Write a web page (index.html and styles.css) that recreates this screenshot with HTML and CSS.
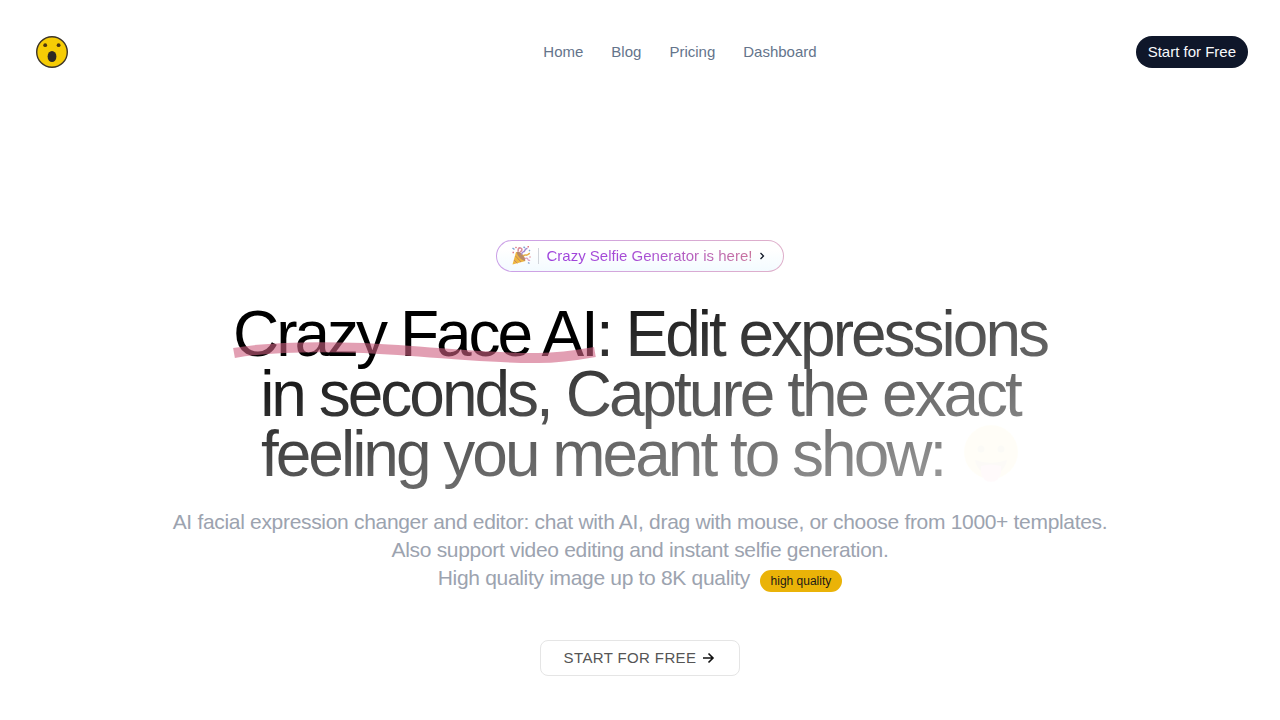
FILE: index.html
```
<!doctype html>
<html lang="en">
  <head>
    <meta charset="UTF-8" />
    <meta name="viewport" content="width=device-width, initial-scale=1.0" />
    <title>Crazy Face AI</title>
    <link rel="stylesheet" href="styles.css">
  </head>
  <body>
    <header class="header">
      <a class="logo" href="#" aria-label="Crazy Face AI">
        <svg viewBox="0 0 32 32" width="32" height="32">
          <circle cx="16" cy="16" r="15.3" fill="#f6cc05" stroke="#3c3427" stroke-width="1.4" />
          <circle cx="9.2" cy="9.2" r="1.9" fill="#4a3510" />
          <circle cx="22.6" cy="9.2" r="1.9" fill="#4a3510" />
          <ellipse cx="16" cy="20.5" rx="4.4" ry="5.5" fill="#2d2924" />
        </svg>
      </a>
      <nav class="nav">
        <a href="#">Home</a>
        <a href="#">Blog</a>
        <a href="#">Pricing</a>
        <a href="#">Dashboard</a>
      </nav>
      <div class="header-actions">
        <button class="start-btn" type="button">Start for Free</button>
      </div>
    </header>

    <main class="hero">
      <a class="announcement" href="#">
        <svg class="party" viewBox="0 0 20 20" width="20" height="20" aria-hidden="true">
          <path d="M1.5 18.5 5 6C9 7 13 11 14.5 15z" fill="#efb840" />
          <path d="m4.5 10 5.5 6M3 14l3.3 3.3M5.8 6.2 13.7 15" fill="none" stroke="#c98560" stroke-width="1" />
          <ellipse cx="10" cy="10" rx="2.2" ry="5.7" transform="rotate(-42 10 10)" fill="#b98a68" />
          <path d="M7.5 5.5c-1-2 0-4 2-3.5s2 3-.5 4" fill="none" stroke="#d98f9d" stroke-width="1.6" />
          <path d="M10.5 8.5c.5-3 2-2 3-3.5s1-3 3-2.500" fill="none" stroke="#a58bd0" stroke-width="1.4" />
          <path d="M12 10c2-2 3.5 0 5-1.5s1.5-1 2-1" fill="none" stroke="#e5b04b" stroke-width="1.6" />
          <path d="M14 13c1-1.5 2.5-1 3 .5s1.5 1 2 .5" fill="none" stroke="#dd9bc0" stroke-width="1.2" />
          <path d="m1.5 2 2 1.5M12.5.8l1.5 1M18 5l1-.8M17 16.5l1.5 1" stroke="#7fa4d4" stroke-width="1.5" />
          <path d="m4.5 1 1 1M16.5.8H18M1.5 6.5H3M18.5 11h1" stroke="#de7a85" stroke-width="1.4" />
        </svg>
        <span class="divider"></span>
        <span class="announcement-text">Crazy Selfie Generator is here!</span>
        <svg class="chevron" viewBox="0 0 24 24" width="12" height="12" aria-hidden="true">
          <path d="m9 18 6-6-6-6" />
        </svg>
      </a>

      <h1 class="title">
        <span class="brand">Crazy Face AI<svg class="underline" viewBox="0 0 366 24" preserveAspectRatio="none" aria-hidden="true">
          <path d="M1 13C34 7 74 6 132 8C208 12 260 19 308 18C330 18 348 15 365 12" />
        </svg></span>: Edit expressions<br />
        in seconds, Capture the exact<br />
        feeling you meant to show:
        <svg class="face" viewBox="0 0 56 60" aria-hidden="true">
          <circle cx="28" cy="28" r="27" fill="#ffe45c" />
          <circle cx="18" cy="25" r="3.5" fill="#b09a40" />
          <circle cx="38" cy="25" r="3.5" fill="#b09a40" />
          <path d="M12 36q16 6 32 0q-3 14-16 14T12 36z" fill="#c09050" />
          <path d="M18 42q10-3 20 0v7q-2 9-10 9t-10-9z" fill="#ff9fb0" />
        </svg>
      </h1>

      <p class="subtitle">
        AI facial expression changer and editor: chat with AI, drag with mouse, or choose from 1000+ templates.<br />
        Also support video editing and instant selfie generation.<br />
        High quality image up to 8K quality
        <span class="badge">high quality</span>
      </p>

      <a class="cta" href="#">
        START FOR FREE
        <svg viewBox="0 0 16 16" width="16" height="16" aria-hidden="true">
          <path d="M3 8h10M8.500 3.500 13 8l-4.500 4.500" />
        </svg>
      </a>
    </main>
  </body>
</html>
```

FILE: styles.css
```
* {
  box-sizing: border-box;
}

body {
  margin: 0;
  background: #fff;
  font-family: "Liberation Sans", Arial, sans-serif;
  font-size: 15px;
  line-height: 24px;
}

a {
  color: inherit;
  text-decoration: none;
}

.header {
  display: grid;
  grid-template-columns: 1fr auto 1fr;
  align-items: center;
  padding: 36px 32px;
}

.logo {
  justify-self: start;
  display: flex;
  padding-left: 4px;
}

.nav {
  display: flex;
  gap: 28px;
  padding-left: 80px;
  color: #64748b;
}

.header-actions {
  justify-self: end;
}

.start-btn {
  display: block;
  height: 32px;
  padding: 0 12px;
  border: none;
  border-radius: 16px;
  background: #0f172a;
  color: #f8fafc;
  font: inherit;
  cursor: pointer;
}

.hero {
  display: flex;
  flex-direction: column;
  align-items: center;
  padding: 136px 32px 44px;
  text-align: center;
}

.announcement {
  display: flex;
  align-items: center;
  height: 32px;
  padding: 0 15px 0 14px;
  border: 1px solid transparent;
  border-radius: 16px;
  background:
    linear-gradient(#ffffff 30%, #f3fbff) padding-box,
    linear-gradient(to right, #cba0e8, #dfafca) border-box;
}

.divider {
  width: 1px;
  height: 16px;
  margin: 0 8px 0 7px;
  background: #d1d5db;
}

.announcement-text {
  background: linear-gradient(to right, #9d40dc, #aa50d2 50%, #c8739d);
  background-clip: text;
  color: transparent;
}

.chevron {
  margin-left: 4px;
  fill: none;
  stroke: #111827;
  stroke-width: 2.5;
}

.title {
  margin: 32px 0 0;
  padding: 0 58px 8px;
  font-size: 64px;
  font-weight: 400;
  line-height: 60px;
  letter-spacing: -3px;
  background: linear-gradient(to bottom right, #000 17%, #1c1c1c 28%, #5a5a5a 54%, #939393 85%, #a9a9a9);
  background-clip: text;
  color: transparent;
}

.brand {
  position: relative;
  display: inline-block;
  color: #000;
}

/* hand-drawn marker stroke over the product name */
.underline {
  position: absolute;
  left: 0;
  bottom: 0;
  width: 100%;
  height: 24px;
  fill: none;
  stroke: #d06182;
  stroke-width: 10;
  opacity: 0.6;
}

.face {
  width: 56px;
  height: 60px;
  margin-left: 4px;
  vertical-align: -8px;
  opacity: 0.04;
}

.subtitle {
  margin: 16px 0 0;
  color: #9ca3af;
  font-size: 21px;
  line-height: 28px;
  letter-spacing: -0.015em;
}

.badge {
  display: inline-block;
  margin-left: 4px;
  padding: 0 11px;
  border-radius: 11px;
  background: #eab308;
  color: #1c1917;
  font-size: 12px;
  line-height: 22px;
  letter-spacing: 0;
}

.cta {
  display: flex;
  align-items: center;
  justify-content: center;
  gap: 4px;
  width: 200px;
  height: 36px;
  margin-top: 48px;
  border: 1px solid #e5e5e5;
  border-radius: 8px;
  color: #555;
  letter-spacing: 0.025em;
}

.cta svg {
  fill: none;
  stroke: #111;
  stroke-width: 1.6;
}
```
